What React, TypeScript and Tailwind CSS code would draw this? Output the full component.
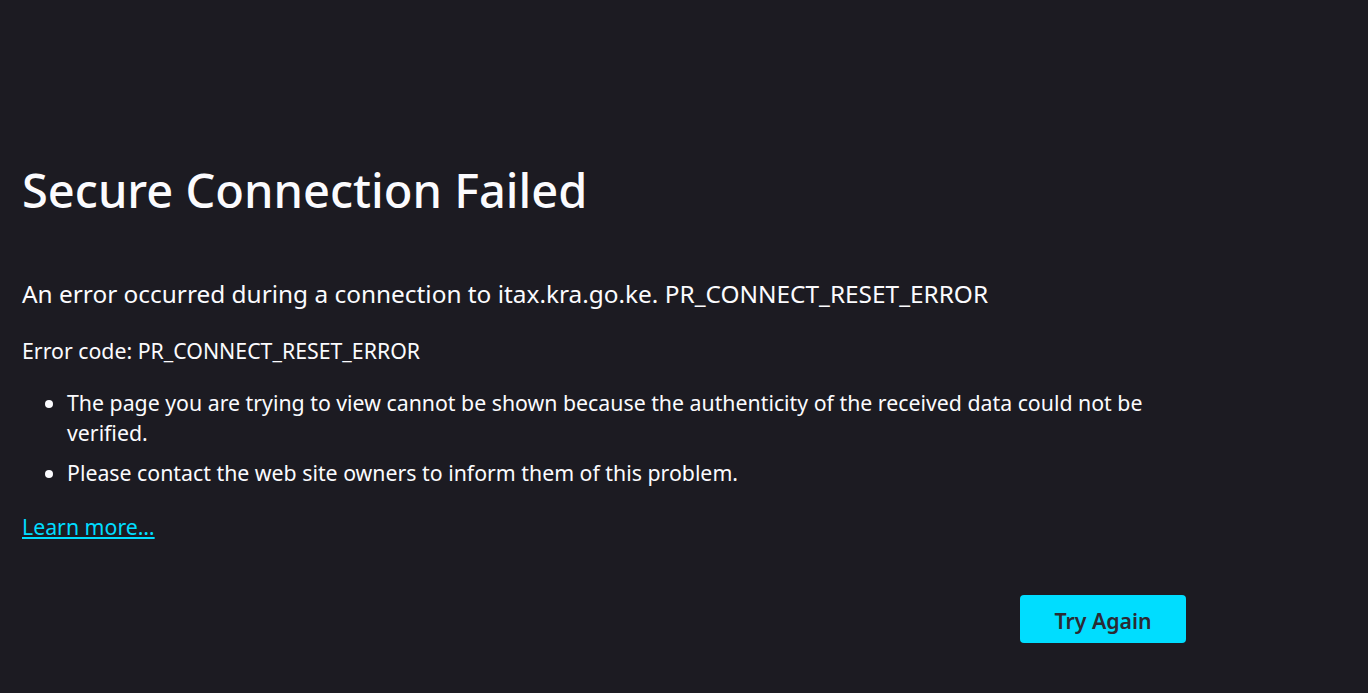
export default function App() {
  return (
    <div
      className="min-h-screen w-full bg-[#1c1b22] text-[#fbfbfe]"
      style={{ fontFamily: '"Noto Sans", "Open Sans", sans-serif' }}
    >
      <div className="max-w-[1164px] ml-[22px] pt-[160px]">
        <h1 className="text-[47px] leading-[60px] font-medium">Secure Connection Failed</h1>
        <p className="mt-[56px] text-[24.4px] leading-[36px]">
          An error occurred during a connection to itax.kra.go.ke. PR_CONNECT_RESET_ERROR
        </p>
        <p className="mt-[24px] text-[21.3px] leading-[30px]">Error code: PR_CONNECT_RESET_ERROR</p>
        <ul className="mt-[22px] pl-[45px] list-disc text-[21.3px] leading-[30px]">
          <li>
            The page you are trying to view cannot be shown because the authenticity of the received data could not be
            verified.
          </li>
          <li className="mt-[10px]">Please contact the web site owners to inform them of this problem.</li>
        </ul>
        <a href="#" className="block mt-[24px] text-[21.3px] leading-[30px] text-[#00ddff] underline">
          Learn more…
        </a>
        <div className="flex justify-end mt-[53px]">
          <button className="w-[166px] h-[48px] rounded-[4px] bg-[#00ddff] text-[#2b2a33] text-[21.3px] font-semibold pt-[3px]">
            Try Again
          </button>
        </div>
      </div>
    </div>
  );
}
